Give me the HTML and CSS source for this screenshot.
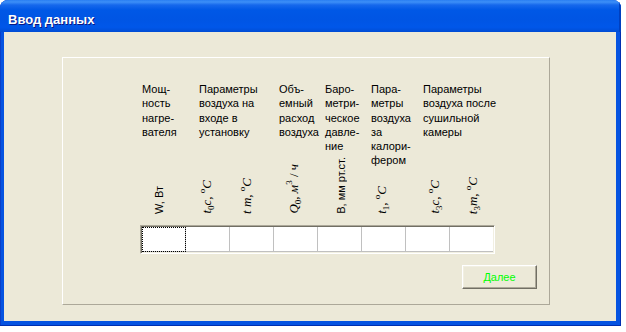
FILE: index.html
```html
<!DOCTYPE html>
<html lang="ru">
<head>
<meta charset="UTF-8">
<title>Ввод данных</title>
<link rel="stylesheet" href="styles.css">
</head>
<body>
    <div class="window">
        <div class="titlebar">Ввод данных</div>
        <div class="client">
            <div class="panel">
                <div class="heads">
                    <div class="head head--power">Мощ-<br>ность<br>нагре-<br>вателя</div>
                    <div class="head head--inlet">Параметры<br>воздуха на<br>входе в<br>установку</div>
                    <div class="head head--flow">Объ-<br>емный<br>расход<br>воздуха</div>
                    <div class="head head--baro">Баро-<br>метри-<br>ческое<br>давле-<br>ние</div>
                    <div class="head head--heater">Пара-<br>метры<br>воздуха<br>за<br>калори-<br>фером</div>
                    <div class="head head--dryer">Параметры<br>воздуха после<br>сушильной<br>камеры</div>

                    <div class="unit unit--plain unit--1">W, Вт</div>
                    <div class="unit unit--2"><i>t</i><sub>0</sub><i>c</i>, <sup>o</sup><i>C</i></div>
                    <div class="unit unit--3"><i>t m</i>, <sup>o</sup><i>C</i></div>
                    <div class="unit unit--4"><i>Q</i><sub>0</sub>, <i>м</i><sup>3</sup> / <i>ч</i></div>
                    <div class="unit unit--plain unit--5">В, мм рт.ст.</div>
                    <div class="unit unit--6"><i>t</i><sub>1</sub>, <sup>o</sup><i>C</i></div>
                    <div class="unit unit--7"><i>t</i><sub>3</sub><i>c</i>, <sup>o</sup><i>C</i></div>
                    <div class="unit unit--8"><i>t</i><sub>3</sub><i>m</i>, <sup>o</sup><i>C</i></div>
                </div>
                <div class="table">
                    <div class="cell cell--focus"></div>
                    <div class="cell"></div>
                    <div class="cell"></div>
                    <div class="cell"></div>
                    <div class="cell"></div>
                    <div class="cell"></div>
                    <div class="cell"></div>
                    <div class="cell"></div>
                </div>
                <div class="actions">
                    <button class="btn" type="button">Далее</button>
                </div>
            </div>
        </div>
    </div>
</body>
</html>
```

FILE: styles.css
```css
* {
    box-sizing: border-box;
}
body {
    margin: 0;
    background: #fff;
    font-family: "Liberation Sans", Arial, sans-serif;
    font-size: 11px;
    color: #000;
}
.window {
    width: 621px;
    height: 326px;
    display: flex;
    flex-direction: column;
    background: #0553e1;
    border-radius: 8px 8px 0 0;
    overflow: hidden;
    box-shadow: inset -1px -1px 0 #002fb0, inset 1px 0 0 #0a3fc8;
}
.titlebar {
    flex: none;
    height: 32px;
    padding: 12px 0 0 8px;
    line-height: 16px;
    font-size: 13px;
    font-weight: bold;
    color: #fff;
    text-shadow: 1px 1px #0a1883;
    background: linear-gradient(#2a7ef2 0, #3d8ff7 2px, #1668ec 5px, #0058e6 10px, #0055e4 60%, #0057e9 85%, #004cd4 100%);
    box-shadow: inset -2px 0 0 #0040c0;
}
.client {
    flex: 1;
    margin: 0 5px 5px 4px;
    padding: 25px 0 0 58px;
    background: #ece9d8;
}
.panel {
    width: 488px;
    height: 248px;
    padding: 24px 12px 0 77px;
    border: 1px solid;
    border-color: #fff #aca899 #aca899 #fff;
}

/* column titles and rotated units share one grid row */
.heads {
    display: grid;
    grid-template-columns: repeat(8, 44px);
    grid-template-rows: 132px;
    margin-left: 1px;
    line-height: 14.3px;
}
.head {
    grid-row: 1;
    align-self: start;
    white-space: nowrap;
}
.head--power { grid-column: 1; padding-left: 1px; }
.head--inlet { grid-column: 2 / span 2; padding-left: 14px; }
.head--flow { grid-column: 4; padding-left: 6px; }
.head--baro { grid-column: 5; padding-left: 8px; }
.head--heater { grid-column: 6; padding-left: 10px; }
.head--dryer { grid-column: 7 / span 2; padding-left: 18px; }

.unit {
    grid-row: 1;
    align-self: end;
    justify-self: start;
    writing-mode: vertical-rl;
    transform: rotate(180deg);
    line-height: 16px;
    font-family: "Liberation Serif", "Times New Roman", serif;
    font-size: 13px;
    white-space: nowrap;
}
.unit sub,
.unit sup {
    font-size: 9px;
    line-height: 0;
}
.unit--plain {
    font-family: "Liberation Sans", Arial, sans-serif;
    font-size: 11px;
}
.unit--1 { grid-column: 1; margin-left: 10px; }
.unit--2 { grid-column: 2; margin-left: 14px; }
.unit--3 { grid-column: 3; margin-left: 10px; }
.unit--4 { grid-column: 4; margin-left: 13px; }
.unit--5 { grid-column: 5; margin-left: 16px; }
.unit--6 { grid-column: 6; margin-left: 13px; }
.unit--7 { grid-column: 7; margin-left: 22px; }
.unit--8 { grid-column: 8; margin-left: 16px; }

.table {
    display: flex;
    width: max-content;
    margin-top: 11px;
    padding: 1px;
    background: #fff;
    border: 1px solid;
    border-color: #aca899 #fff #fff #aca899;
    box-shadow: inset 1px 1px 0 #716f64, inset -1px -1px 0 #f1efe2;
}
.cell {
    width: 44px;
    height: 25px;
    background: #fff;
    border-right: 1px solid #c0c0c0;
    border-bottom: 1px solid #c0c0c0;
}
.cell:last-child {
    width: 43px;
    border-right: none;
}
.cell--focus {
    outline: 1px dotted #000;
    outline-offset: -1px;
}
.actions {
    display: flex;
    justify-content: flex-end;
    margin-top: 11px;
}
.btn {
    width: 75px;
    height: 24px;
    padding: 0;
    background: #ece9d8;
    border: 1px solid;
    border-color: #fff #716f64 #716f64 #fff;
    box-shadow: inset -1px -1px 0 #aca899, inset 1px 1px 0 #f1efe2;
    color: #00ff00;
    font: 11px "Liberation Sans", Arial, sans-serif;
}
```
